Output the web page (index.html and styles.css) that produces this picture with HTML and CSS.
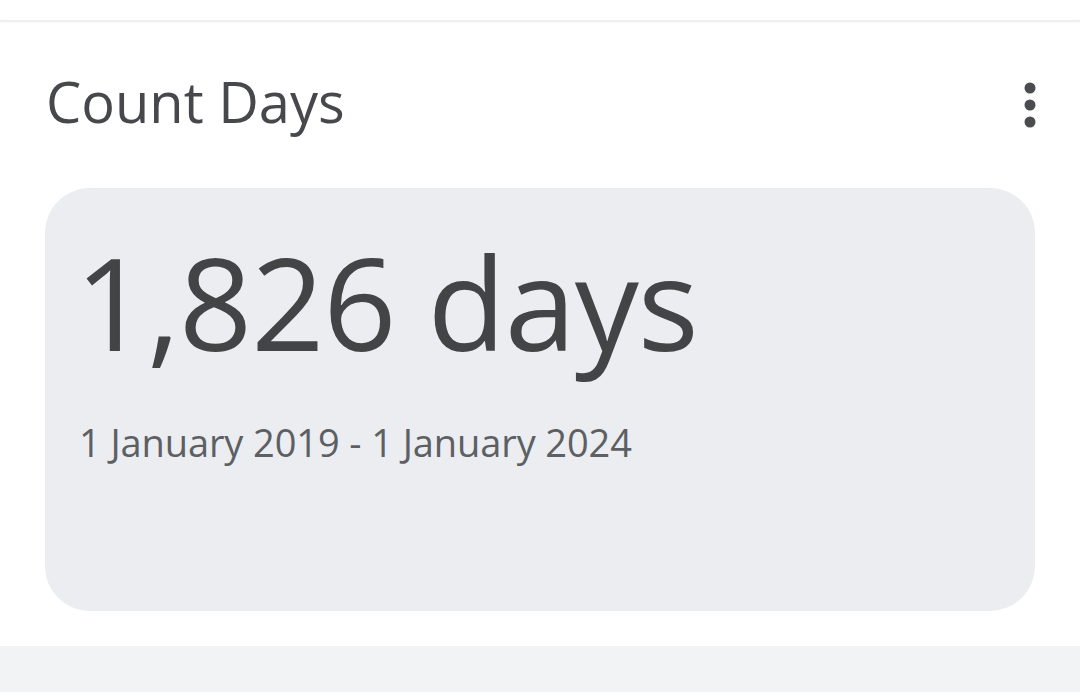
FILE: index.html
```html
<!DOCTYPE html>
<html>
<head>
<meta charset="utf-8">
<link rel="stylesheet" href="styles.css">
</head>
<body>
<div class="page">
  <div class="topbar"></div>
  <div class="header">
    <h1 class="title">Count Days</h1>
    <button class="menu" aria-label="More options">
      <svg width="12" height="46" viewBox="0 0 12 46">
        <circle cx="6" cy="6" r="5.5" fill="#4a4c50"/>
        <circle cx="6" cy="23" r="5.5" fill="#4a4c50"/>
        <circle cx="6" cy="40" r="5.5" fill="#4a4c50"/>
      </svg>
    </button>
  </div>
  <div class="card">
    <div class="count">1,826 days</div>
    <div class="range">1 January 2019 - 1 January 2024</div>
  </div>
  <div class="band"></div>
</div>
</body>
</html>
```
FILE: styles.css
```css
html, body {
  margin: 0;
  padding: 0;
  background: #ffffff;
}
.page {
  width: 1080px;
  height: 696px;
  display: flex;
  flex-direction: column;
  font-family: "Open Sans", "Liberation Sans", sans-serif;
  overflow: hidden;
}
.topbar {
  height: 20px;
  border-bottom: 2px solid #efefef;
  box-shadow: 0 1px 2px rgba(0,0,0,0.03);
  flex: none;
}
.header {
  display: flex;
  align-items: flex-start;
  justify-content: space-between;
  padding: 51px 45px 0 46px;
  height: 115px;
  box-sizing: border-box;
  flex: none;
}
.title {
  margin: 0;
  font-size: 56px;
  line-height: 56px;
  font-weight: 400;
  color: #46484c;
  letter-spacing: 0;
}
.menu {
  border: 0;
  background: none;
  padding: 0;
  margin-top: 9px;
  margin-right: -1px;
  display: block;
}
.menu svg { display: block; }
.card {
  margin: 51px 45px 0 45px;
  height: 423px;
  box-sizing: border-box;
  background: #ebedf0;
  border-radius: 45px;
  padding: 50px 0 0 30px;
  flex: none;
}
.count {
  font-size: 128px;
  line-height: 128px;
  color: #434446;
  letter-spacing: -1.1px;
}
.range {
  margin-top: 57px;
  padding-left: 4px;
  font-size: 38px;
  line-height: 38px;
  color: #5c5f63;
  letter-spacing: -0.1px;
}
.band {
  margin-top: 35px;
  height: 46px;
  background: #f1f3f4;
  flex: none;
}
```
